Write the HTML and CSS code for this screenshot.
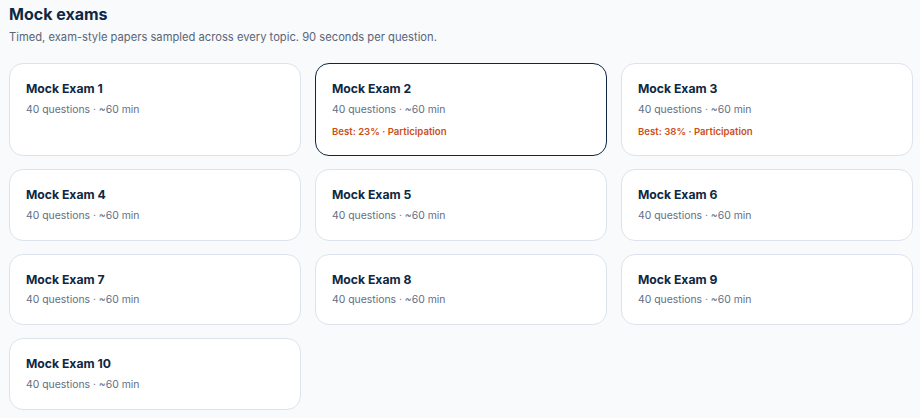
FILE: index.html
```html
<!doctype html>
<html lang="en">
<head>
  <meta charset="utf-8">
  <title>Mock exams</title>
  <link rel="stylesheet" href="styles.css">
</head>
<body>
  <div class="page">
    <h1>Mock exams</h1>
    <p class="lead">Timed, exam-style papers sampled across every topic. 90 seconds per question.</p>

    <div class="exam-grid">
      <div class="exam-card">
        <div class="exam-title">Mock Exam 1</div>
        <div class="exam-meta">40 questions · ~60 min</div>
      </div>
      <div class="exam-card selected">
        <div class="exam-title">Mock Exam 2</div>
        <div class="exam-meta">40 questions · ~60 min</div>
        <div class="exam-best">Best: 23% · Participation</div>
      </div>
      <div class="exam-card">
        <div class="exam-title">Mock Exam 3</div>
        <div class="exam-meta">40 questions · ~60 min</div>
        <div class="exam-best">Best: 38% · Participation</div>
      </div>
      <div class="exam-card">
        <div class="exam-title">Mock Exam 4</div>
        <div class="exam-meta">40 questions · ~60 min</div>
      </div>
      <div class="exam-card">
        <div class="exam-title">Mock Exam 5</div>
        <div class="exam-meta">40 questions · ~60 min</div>
      </div>
      <div class="exam-card">
        <div class="exam-title">Mock Exam 6</div>
        <div class="exam-meta">40 questions · ~60 min</div>
      </div>
      <div class="exam-card">
        <div class="exam-title">Mock Exam 7</div>
        <div class="exam-meta">40 questions · ~60 min</div>
      </div>
      <div class="exam-card">
        <div class="exam-title">Mock Exam 8</div>
        <div class="exam-meta">40 questions · ~60 min</div>
      </div>
      <div class="exam-card">
        <div class="exam-title">Mock Exam 9</div>
        <div class="exam-meta">40 questions · ~60 min</div>
      </div>
      <div class="exam-card">
        <div class="exam-title">Mock Exam 10</div>
        <div class="exam-meta">40 questions · ~60 min</div>
      </div>
    </div>
  </div>
</body>
</html>
```

FILE: styles.css
```css
body {
  margin: 0;
  background: #f8fafc;
  font-family: Inter, "Noto Sans", sans-serif;
  color: #0f2742;
}
.page {
  padding: 3px 7px 8px 9px;
}
h1 {
  margin: 0;
  font-size: 16px;
  line-height: 22px;
  font-weight: 700;
  color: #0f2742;
}
.lead {
  margin: 3px 0 0;
  font-size: 11.2px;
  line-height: 18px;
  color: #5b6577;
}
.exam-grid {
  display: grid;
  grid-template-columns: repeat(3, 1fr);
  gap: 13px 14px;
  margin-top: 17px;
}
.exam-card {
  background: #fff;
  border: 1px solid #dde3ec;
  border-radius: 14px;
  padding: 16px;
}
.exam-card.selected {
  border-color: #0f2742;
}
.exam-title {
  font-size: 12.2px;
  line-height: 18px;
  font-weight: 700;
  color: #0f2742;
}
.exam-meta {
  margin-top: 3.5px;
  font-size: 10.4px;
  line-height: 16px;
  color: #636e7f;
}
.exam-best {
  margin-top: 6.5px;
  font-size: 9.6px;
  line-height: 15px;
  font-weight: 600;
  color: #cc4f17;
}
```
